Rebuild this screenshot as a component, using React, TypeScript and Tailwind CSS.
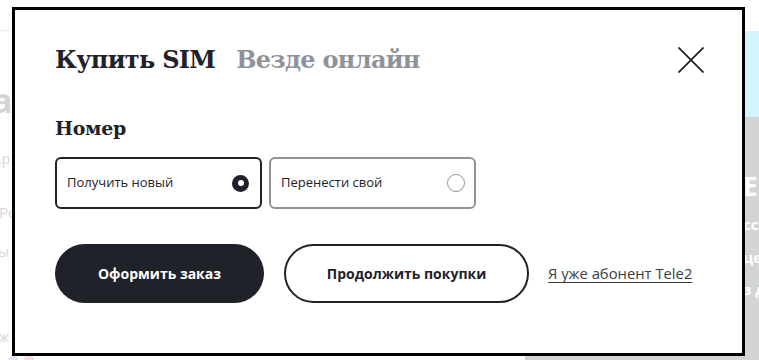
export default function App() {
  return (
    <div className="relative w-[759px] h-[360px] overflow-hidden bg-white font-['Open_Sans',sans-serif]">
      {/* faded page behind the modal */}
      <div className="flex h-full">
        <div className="w-[533px] shrink-0 border-t border-[#ececec] mt-[30px] flex flex-col text-[#d6d6d8] leading-none ml-[-8px]">
          <div className="mt-[52px] text-[34px] font-bold text-[#d4d4d6]">a</div>
          <div className="mt-[35px] ml-[6px] text-[14px]">.р</div>
          <div className="mt-[39px] ml-[7px] text-[15px]">Ро</div>
          <div className="mt-[25px] ml-[6px] text-[14px]">ы</div>
          <div className="mt-[71px] ml-[7px] text-[14px]">ж</div>
          <div className="mt-[11px] ml-[16px] flex gap-[6px]">
            <span className="w-[10px] h-[10px] rounded-full bg-[#dfe6f6]" />
            <span className="w-[10px] h-[10px] rounded-full bg-[#f6dfe3]" />
          </div>
        </div>
        <div className="flex-1 flex flex-col pt-[31px]">
          <div className="h-[86px] bg-[#d5f3fb]" />
          <div className="flex-1 bg-[#d3d4d6] font-bold text-white leading-none whitespace-nowrap pl-[218px] flex flex-col">
            <div className="mt-[56px] text-[26px]">EI</div>
            <div className="mt-[18px] text-[15px]">ссі</div>
            <div className="mt-[18px] text-[15px]">це</div>
            <div className="mt-[17px] text-[15px]">з д</div>
          </div>
        </div>
      </div>

      {/* modal */}
      <div className="absolute left-[12px] top-[7px] w-[733px] h-[349px] border-[3px] border-black bg-white px-[40px] pt-[30px] text-[#1f2229]">
        <div className="flex items-center justify-between h-[40px]">
          <div className="flex items-baseline gap-[21px] font-['DejaVu_Serif',serif] font-bold text-[24px] leading-none tracking-[-0.7px]">
            <span>Купить SIM</span>
            <span className="text-[#8f9399]">Везде онлайн</span>
          </div>
          <svg width="26" height="26" viewBox="0 0 26 26" className="mr-[-2px]" fill="none" stroke="#1f2229" strokeWidth="1.8">
            <path d="M0.5 0.5L25.5 25.5M25.5 0.5L0.5 25.5" />
          </svg>
        </div>

        <div className="mt-[34px] font-['DejaVu_Serif',serif] font-bold text-[19px] leading-[28px] tracking-[-0.3px]">Номер</div>

        <div className="mt-[15px] flex gap-[7px]">
          <div className="w-[207px] h-[52px] rounded-[6px] border-2 border-[#1f2229] flex items-center justify-between pl-[10px] pr-[11px]">
            <span className="text-[13px]">Получить новый</span>
            <span className="w-[17px] h-[17px] rounded-full bg-[#1f2229] flex items-center justify-center">
              <span className="w-[6px] h-[6px] rounded-full bg-white" />
            </span>
          </div>
          <div className="w-[207px] h-[52px] rounded-[6px] border-2 border-[#8f9399] flex items-center justify-between pl-[10px] pr-[9px]">
            <span className="text-[13px]">Перенести свой</span>
            <span className="w-[18px] h-[18px] rounded-full border-[1.5px] border-[#8f9399]" />
          </div>
        </div>

        <div className="mt-[35px] flex items-center">
          <button className="w-[209px] h-[59px] rounded-full bg-[#1f2229] text-white text-[14px] font-bold">
            Оформить заказ
          </button>
          <button className="ml-[20px] w-[245px] h-[59px] rounded-full border-2 border-[#1f2229] text-[14px] font-bold">
            Продолжить покупки
          </button>
          <a className="ml-[19px] text-[14.8px] text-[#3a3d44] underline underline-offset-[3px]">Я уже абонент Tele2</a>
        </div>
      </div>
    </div>
  );
}
